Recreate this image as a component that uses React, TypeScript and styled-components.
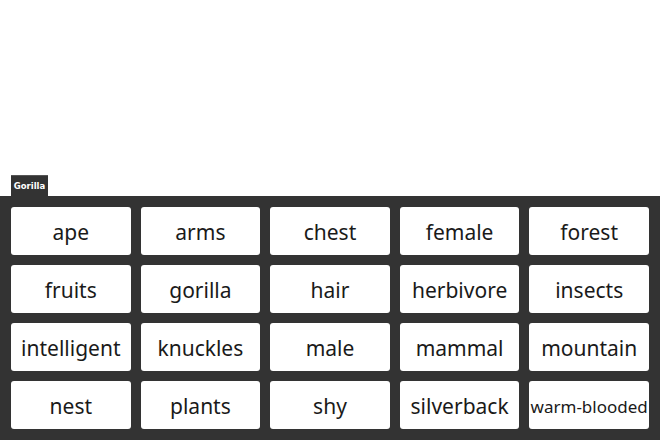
import React from 'react';
import styled, {createGlobalStyle} from "styled-components";

const GlobalStyle = createGlobalStyle`
  html, body {
    margin: 0;
    padding: 0;
    background: #ffffff;
    font-family: "Noto Sans", sans-serif;
  }
`;

const Page = styled.div`
  width: 660px;
  height: 440px;
  display: flex;
  flex-direction: column;
  justify-content: flex-end;
  overflow: hidden;
`;

const TabRow = styled.div`
  display: flex;
  padding-left: 11px;
`;

const Tab = styled.div`
  background: #333333;
  color: #ffffff;
  font-family: "DejaVu Sans", sans-serif;
  font-weight: bold;
  font-size: 8.5px;
  height: 21px;
  width: 37px;
  display: flex;
  align-items: center;
  justify-content: center;
  border-top: 1px solid #555;
  box-sizing: border-box;
`;

const Board = styled.div`
  background: #333333;
  padding: 11px;
  display: grid;
  grid-template-columns: repeat(5, 1fr);
  grid-auto-rows: 48px;
  column-gap: 10px;
  row-gap: 10px;
`;

const Card = styled.div<{$small?: boolean}>`
  background: #ffffff;
  border-radius: 3px;
  display: flex;
  align-items: center;
  justify-content: center;
  padding-top: 2px;
  box-sizing: border-box;
  font-size: ${p => (p.$small ? "17px" : "21px")};
  color: #1a1a1a;
  white-space: nowrap;
  overflow: hidden;
`;

const words = [
    "ape", "arms", "chest", "female", "forest",
    "fruits", "gorilla", "hair", "herbivore", "insects",
    "intelligent", "knuckles", "male", "mammal", "mountain",
    "nest", "plants", "shy", "silverback", "warm-blooded",
];

function App() {
    return (
        <Page>
            <GlobalStyle/>
            <TabRow>
                <Tab>Gorilla</Tab>
            </TabRow>
            <Board>
                {words.map(w => (
                    <Card key={w} $small={w.length > 11}>{w}</Card>
                ))}
            </Board>
        </Page>
    );
}

export default App;
